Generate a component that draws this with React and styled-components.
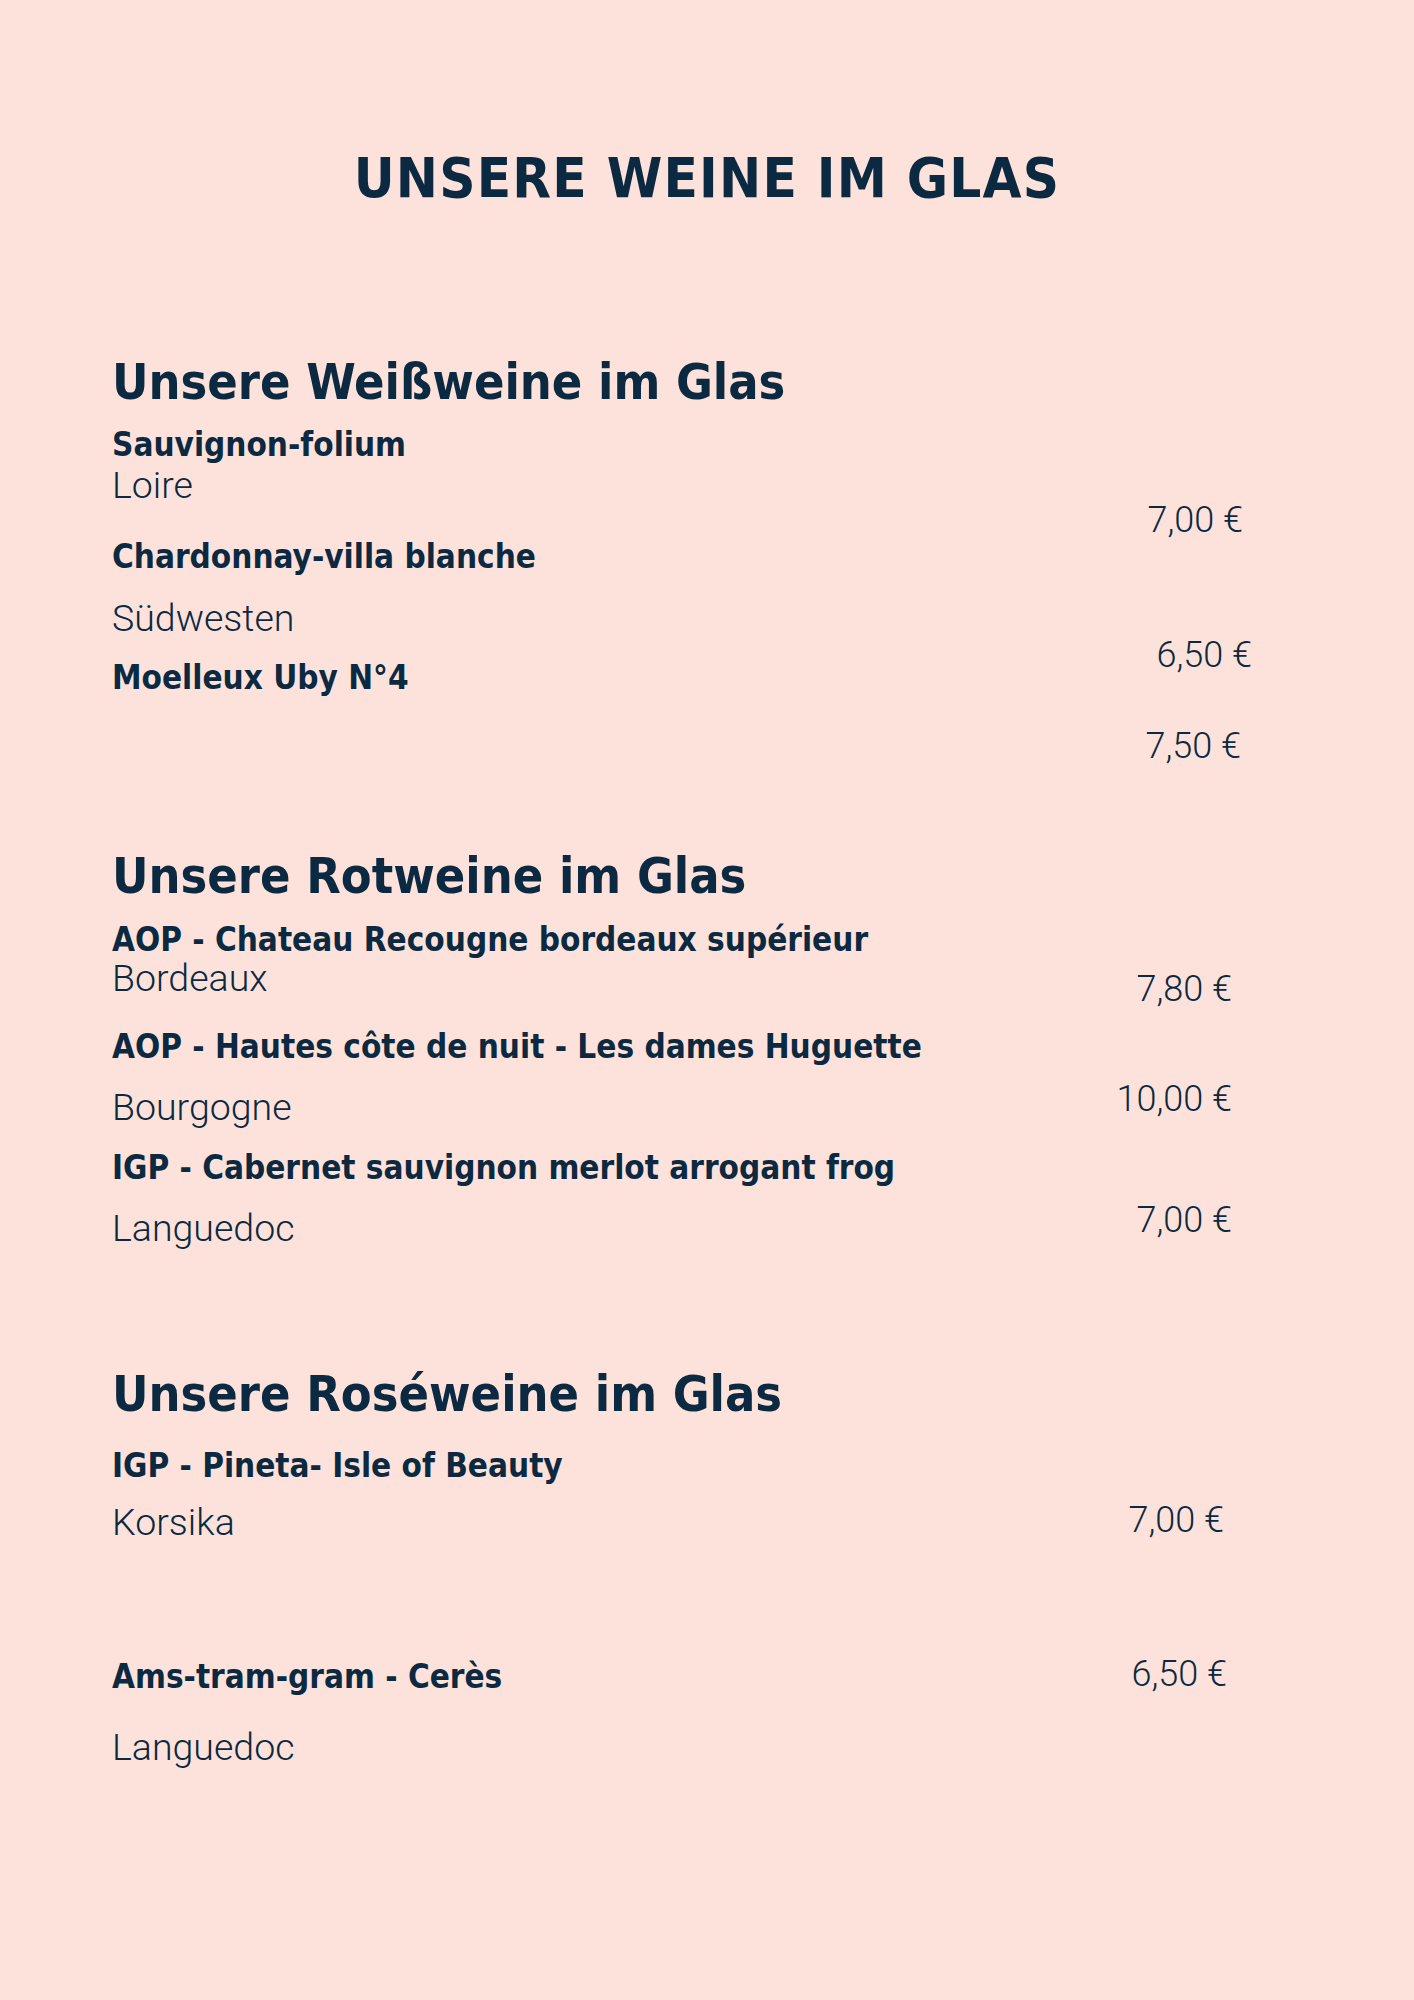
import styled, { createGlobalStyle } from 'styled-components';

const GlobalStyle = createGlobalStyle`
  html, body {
    margin: 0;
    padding: 0;
    background: #fde2db;
  }
`;

const INK = '#0b2940';
const BOLD = `"DejaVu Sans Condensed", "Liberation Sans Narrow", Roboto, sans-serif`;
const LIGHT = `Roboto, "Open Sans", sans-serif`;

const Page = styled.main`
  min-height: 2000px;
  box-sizing: border-box;
  padding: 138px 162px 0 112px;
  background: #fde2db;
  color: ${INK};
  font-family: ${BOLD};
`;

const Title = styled.h1`
  margin: 0 0 0 50px;
  text-align: center;
  font-size: 56px;
  line-height: 80px;
  font-weight: 700;
  letter-spacing: 1.2px;
`;

const Section = styled.section`
  margin-top: ${(p) => p.$top}px;
`;

const Heading = styled.h2`
  margin: 0;
  font-size: 50px;
  line-height: 70px;
  font-weight: 700;
`;

const Body = styled.div`
  display: grid;
  grid-template-columns: minmax(0, 1fr) auto;
`;

const Column = styled.div`
  display: flex;
  flex-direction: column;
  align-items: ${(p) => (p.$end ? 'flex-end' : 'flex-start')};
`;

const Name = styled.div`
  margin-top: ${(p) => p.$top || 0}px;
  font-size: 33px;
  line-height: 40px;
  font-weight: 700;
  white-space: nowrap;
`;

const Region = styled.div`
  margin-top: ${(p) => p.$top || 0}px;
  font-family: ${LIGHT};
  font-size: 37.5px;
  line-height: 40px;
  font-weight: 300;
`;

const Price = styled.div`
  margin-top: ${(p) => p.$top || 0}px;
  margin-right: ${(p) => p.$right || 0}px;
  font-family: ${LIGHT};
  font-size: 36px;
  line-height: 40px;
  font-weight: 300;
  white-space: nowrap;
`;

const sections = [
  {
    title: 'Unsere Weißweine im Glas',
    top: 129,
    lines: [
      { kind: 'name', text: 'Sauvignon-folium', top: 8 },
      { kind: 'region', text: 'Loire', top: 0 },
      { kind: 'name', text: 'Chardonnay-villa blanche', top: 32 },
      { kind: 'region', text: 'Südwesten', top: 21 },
      { kind: 'name', text: 'Moelleux Uby N°4', top: 20 },
    ],
    prices: [
      { text: '7,00 €', top: 83, right: 9 },
      { text: '6,50 €', top: 95, right: 0 },
      { text: '7,50 €', top: 51, right: 11 },
    ],
  },
  {
    title: 'Unsere Rotweine im Glas',
    top: 75,
    lines: [
      { kind: 'name', text: 'AOP - Chateau Recougne bordeaux supérieur', top: 9 },
      { kind: 'region', text: 'Bordeaux', top: -2 },
      { kind: 'name', text: 'AOP - Hautes côte de nuit - Les dames Huguette', top: 29 },
      { kind: 'region', text: 'Bourgogne', top: 20 },
      { kind: 'name', text: 'IGP - Cabernet sauvignon merlot arrogant frog', top: 21 },
      { kind: 'region', text: 'Languedoc', top: 20 },
    ],
    prices: [
      { text: '7,80 €', top: 58, right: 20 },
      { text: '10,00 €', top: 70, right: 20 },
      { text: '7,00 €', top: 81, right: 20 },
    ],
  },
  {
    title: 'Unsere Roséweine im Glas',
    top: 111,
    lines: [
      { kind: 'name', text: 'IGP - Pineta- Isle of Beauty', top: 17 },
      { kind: 'region', text: 'Korsika', top: 16 },
      { kind: 'name', text: 'Ams-tram-gram - Cerès', top: 115 },
      { kind: 'region', text: 'Languedoc', top: 30 },
    ],
    prices: [
      { text: '7,00 €', top: 71, right: 28 },
      { text: '6,50 €', top: 114, right: 25 },
    ],
  },
];

const App = () => (
  <>
    <GlobalStyle />
    <Page>
      <Title>UNSERE WEINE IM GLAS</Title>
      {sections.map((s) => (
        <Section key={s.title} $top={s.top}>
          <Heading>{s.title}</Heading>
          <Body>
            <Column>
              {s.lines.map((l, i) =>
                l.kind === 'name' ? (
                  <Name key={i} $top={l.top}>{l.text}</Name>
                ) : (
                  <Region key={i} $top={l.top}>{l.text}</Region>
                )
              )}
            </Column>
            <Column $end>
              {s.prices.map((p, i) => (
                <Price key={i} $top={p.top} $right={p.right}>{p.text}</Price>
              ))}
            </Column>
          </Body>
        </Section>
      ))}
    </Page>
  </>
);

export default App;
